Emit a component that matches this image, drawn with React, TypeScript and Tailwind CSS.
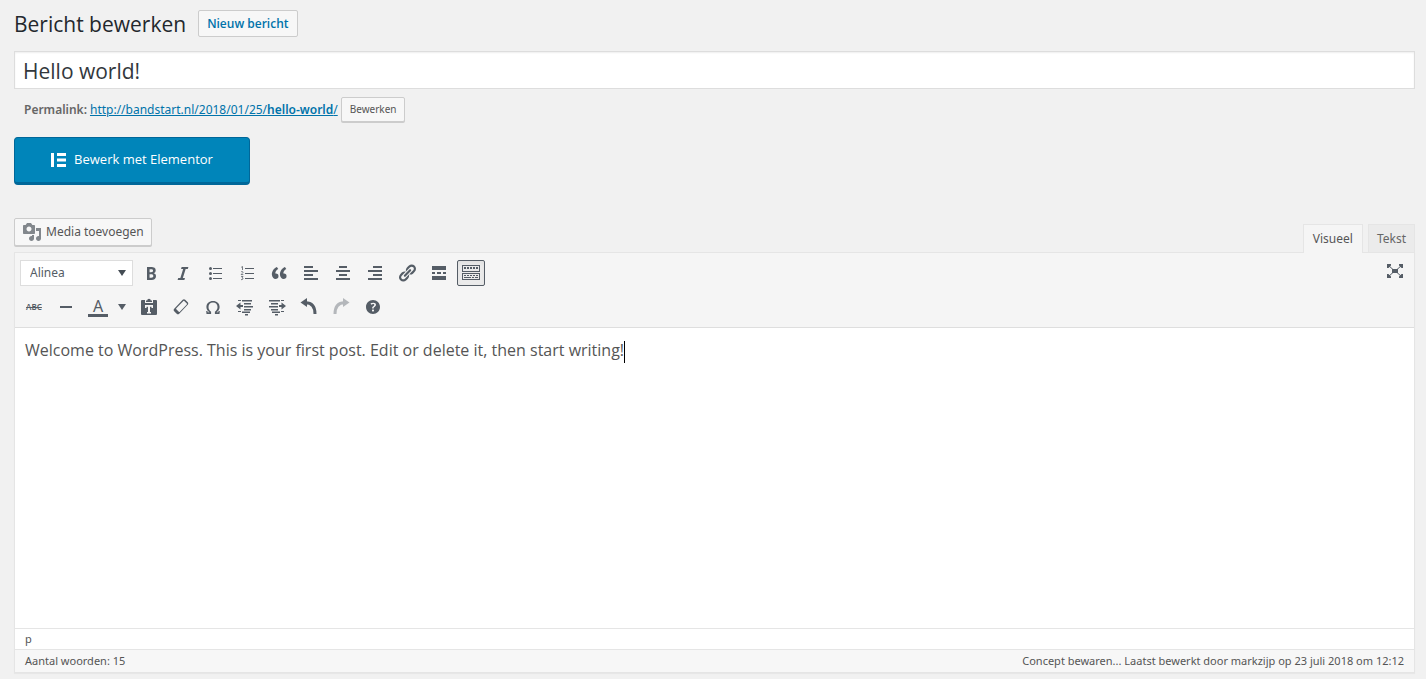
import type { ReactNode } from "react";

const icons: Record<string, ReactNode> = {
    bold: <path d="M6 4v13h4.54c1.37 0 2.46-.33 3.26-1 .8-.66 1.2-1.58 1.2-2.77 0-.84-.17-1.51-.51-2.01s-.9-.85-1.67-1.03v-.09c.57-.1 1.02-.4 1.36-.9s.51-1.13.51-1.91c0-1.14-.39-1.98-1.17-2.5C12.75 4.26 11.5 4 9.78 4H6zm2.57 5.15V6.26h1.36c.73 0 1.27.11 1.61.32.34.22.51.58.51 1.07 0 .54-.16.92-.47 1.15s-.82.35-1.51.35h-1.5zm0 2.19h1.6c1.44 0 2.16.53 2.16 1.61 0 .6-.17 1.05-.51 1.34s-.86.43-1.57.43H8.57v-3.38z" />,
    italic: <path d="M14.78 6h-2.13l-2.8 9h2.12l-.62 2H4.6l.62-2h2.14l2.8-9H8.03l.62-2h6.75z" />,
    bullets: (
        <>
            <circle cx="5.5" cy="5.5" r="1.5" />
            <circle cx="5.5" cy="10.5" r="1.5" />
            <circle cx="5.5" cy="15.5" r="1.5" />
            <path d="M8 5h9v1H8zM8 10h9v1H8zM8 15h9v1H8z" />
        </>
    ),
    numbers: (
        <>
            <path d="M8 5h9v1H8zM8 10h9v1H8zM8 15h9v1H8z" />
            <path d="M4.2 4.3L5.5 3.5V7M4 8.9c.8-.6 2-.4 2 .4s-1.5 1.5-1.8 2.3h2.1M4.1 13.5H6l-1 1.4c1.5 0 1.5 2.1-1 1.7" fill="none" stroke="currentColor" strokeWidth="0.8" />
        </>
    ),
    quote: <path d="M9.49 13.22c0-.74-.2-1.38-.61-1.9-.62-.78-1.83-.88-2.53-.72-.29-1.65 1.11-3.75 2.92-4.65L7.88 4c-2.73 1.3-5.42 4.28-4.96 8.05C3.21 14.43 4.59 16 6.54 16c.85 0 1.56-.25 2.12-.75s.83-1.18.83-2.03zm8.05 0c0-.74-.2-1.38-.61-1.9-.63-.78-1.83-.88-2.53-.72-.29-1.65 1.11-3.75 2.92-4.65L15.93 4c-2.73 1.3-5.41 4.28-4.95 8.05.29 2.38 1.66 3.95 3.61 3.95.85 0 1.56-.25 2.12-.75s.83-1.18.83-2.03z" />,
    alignLeft: <path d="M12 5V3H3v2h9zm5 4V7H3v2h14zm-5 4v-2H3v2h9zm5 4v-2H3v2h14z" />,
    alignCenter: <path d="M14 5V3H6v2h8zm3 4V7H3v2h14zm-3 4v-2H6v2h8zm3 4v-2H3v2h14z" />,
    alignRight: <path d="M17 5V3H8v2h9zm0 4V7H3v2h14zm0 4v-2H8v2h9zm0 4v-2H3v2h14z" />,
    link: <path d="M17.74 2.76c1.68 1.69 1.68 4.41 0 6.1l-1.53 1.52c-1.12 1.12-2.7 1.47-4.14 1.09l2.62-2.61.76-.77.76-.76c.84-.84.84-2.2 0-3.04-.84-.85-2.2-.85-3.04 0l-.77.76-3.38 3.38c-.37-1.44-.02-3.02 1.1-4.14l1.52-1.53c1.69-1.68 4.42-1.68 6.1 0zM8.59 13.43l5.34-5.34c.42-.42.42-1.1 0-1.52-.44-.43-1.13-.39-1.53 0l-5.33 5.34c-.42.42-.42 1.1 0 1.52.44.43 1.13.39 1.52 0zm-.76 2.29l4.14-4.15c.38 1.44.03 3.02-1.09 4.14l-1.52 1.53c-1.69 1.68-4.41 1.68-6.1 0-1.68-1.68-1.68-4.42 0-6.1l1.53-1.52c1.12-1.12 2.7-1.47 4.14-1.1l-4.14 4.15c-.85.84-.85 2.2 0 3.05.84.84 2.2.84 3.04 0z" />,
    more: <path d="M17 7V3H3v4h14zM6 11V9H3v2h3zm6 0V9H8v2h4zm5 0V9h-3v2h3zm0 6v-4H3v4h14z" />,
    toolbar: (
        <>
            <path d="M1 2h18v7H1zM1 10h18v7H1zM2 3v5h16V3zM2 11v5h16v-5z" fillRule="evenodd" />
            <path d="M3 4h2v2H3zM6 4h2v2H6zM9 4h2v2H9zM12 4h2v2h-2zM15 4h2v2h-2zM3 12h2v1H3zM6 12h2v1H6zM9 12h2v1H9zM12 12h2v1h-2zM15 12h2v1h-2zM3 14h7v1H3zM11 14h2v1h-2zM14 14h3v1h-3z" />
        </>
    ),
    line: <path d="M4 9h12v2H4z" />,
    paste: (
        <>
            <path d="M3 3h3v3h8V3h3q1 0 1 1v13q0 1-1 1H3q-1 0-1-1V4q0-1 1-1z" />
            <path d="M7 5V3.500h1.200a1.800 1.800 0 0 1 3.600 0H13V5z" />
            <path d="M6 8h8v3h-1.500V9.800H11V15h1v1.500H8V15h1V9.800H7.500V11H6z" fill="#f5f5f5" />
        </>
    ),
    eraser: <path d="M11.700 2.800c.7-.7 1.800-.7 2.500 0l2.500 2.500c.7.7.7 1.800 0 2.500L8.200 16.700c-.7.7-1.800.7-2.500 0l-2.500-2.500c-.7-.7-.7-1.800 0-2.500zM12.400 4L5.300 11.200q-.4.5 0 1l2.500 2.500q.5.4 1 0l7-7.100q.4-.6 0-1.100L13.200 4q-.4-.3-.8 0z" fillRule="evenodd" />,
    omega: <path d="M10 5.400c-2.900 0-4.500 2-4.500 4.700 0 2 .8 3.400 2.600 4.600V17H3.500l-.3-3h1.200l.4 1.300h1.700C4.500 14 3.400 12.300 3.400 10 3.400 6.400 6.100 4 10 4s6.600 2.400 6.600 6c0 2.300-1.100 4-3.100 5.300h1.700l.4-1.300h1.200l-.3 3h-4.600v-2.300c1.800-1.200 2.600-2.600 2.600-4.600 0-2.700-1.600-4.700-4.500-4.700z" />,
    outdent: <path d="M3 3h3v1H3zM7 3h10v1.500H7zM9 6h7v1.500H9zM9 9h9v1.500H9zM9 12h7v1.500H9zM3 14h3v1H3zM7 14.500h8V16H7zM10 17h3v1.500h-3zM5.500 5.500V8H8v2H5.500v2.500L1 9z" />,
    indent: <path d="M14 3h3v1h-3zM2 3h11v1.500H2zM4 6h7v1.500H4zM2 9h9v1.500H2zM4 12h7v1.500H4zM5 14.500h8V16H5zM14 14h3v1h-3zM8 17h3v1.500H8zM14.500 5.500V8H12v2h2.500v2.500L19 9z" />,
    undo: (
        <>
            <path d="M1.500 5.500L8 1v9z" />
            <path d="M6.500 5.800c6 0 9.500 3.700 9.500 11.200" fill="none" stroke="currentColor" strokeWidth="3" />
        </>
    ),
    redo: (
        <>
            <path d="M18.500 5.500L12 1v9z" />
            <path d="M13.500 5.800C7.500 5.800 4 9.500 4 17" fill="none" stroke="currentColor" strokeWidth="3" />
        </>
    ),
    help: <path d="M17 10c0-3.870-3.140-7-7-7-3.870 0-7 3.130-7 7s3.130 7 7 7c3.860 0 7-3.130 7-7zm-6.300 1.480H9.140v-.43c0-.38.08-.7.24-.98s.46-.57.88-.89c.41-.29.68-.53.81-.71.14-.18.2-.39.2-.62 0-.25-.09-.44-.28-.58-.19-.13-.45-.19-.79-.19-.58 0-1.250.19-2 .57l-.64-1.280c.87-.49 1.800-.74 2.770-.74.81 0 1.450.2 1.920.58.48.39.71.91.71 1.550 0 .43-.09.8-.29 1.110-.19.32-.57.67-1.110 1.060-.38.28-.61.49-.71.63-.1.15-.15.34-.15.57v.35zm-1.470 2.740c-.18-.17-.27-.42-.27-.73 0-.33.08-.58.26-.75s.43-.25.77-.25c.32 0 .57.09.75.26s.27.42.27.74c0 .3-.09.55-.27.72-.18.18-.43.27-.75.27-.33 0-.58-.09-.76-.26z" />,
    media: <path d="M13 11V4c0-.55-.45-1-1-1h-1.670L9 1H5L3.670 3H2c-.55 0-1 .45-1 1v7c0 .55.45 1 1 1h10c.55 0 1-.45 1-1zM7 4.500c1.380 0 2.500 1.120 2.500 2.500S8.380 9.500 7 9.500 4.500 8.380 4.500 7 5.620 4.500 7 4.500zM14 6h5v10.500c0 1.380-1.120 2.500-2.500 2.500S14 17.880 14 16.500s1.120-2.500 2.500-2.500c.17 0 .34.02.5.05V9h-3V6zm-4 8.050V13h2v3.500c0 1.380-1.120 2.500-2.500 2.500S7 17.880 7 16.500 8.120 14 9.500 14c.17 0 .34.02.5.05z" />,
    expand: (
        <>
            <path d="M7 8h6v4H7zM2 3h4v1.500L3.500 7H2zM18 3v4h-1.500L14 4.500V3zM2 17v-4h1.500L6 15.500V17zM18 17h-4v-1.500l2.500-2.500H18z" />
            <path d="M3 4l5 4.500M17 4l-5 4.500M3 16l5-4.500M17 16l-5-4.500" stroke="currentColor" />
        </>
    ),
};

function Icon({ name }: { name: string }) {
    return (
        <svg viewBox="0 0 20 20" className="size-5 shrink-0" fill="currentColor" aria-hidden="true">
            {icons[name]}
        </svg>
    );
}

function ToolButton({ label, children, active = false, disabled = false }: { label: string; children: ReactNode; active?: boolean; disabled?: boolean }) {
    return (
        <button
            type="button"
            aria-label={label}
            aria-pressed={active}
            disabled={disabled}
            className={
                active
                    ? "flex h-[26px] w-7 items-center justify-center rounded-xs border border-[#555d66] bg-[#ebebeb] shadow-inner"
                    : "flex h-[26px] w-7 items-center justify-center hover:bg-white disabled:opacity-40"
            }
        >
            {children}
        </button>
    );
}

const firstRow = [
    ["bold", "Vet"],
    ["italic", "Cursief"],
    ["bullets", "Ongenummerde lijst"],
    ["numbers", "Genummerde lijst"],
    ["quote", "Citaat"],
    ["alignLeft", "Links uitlijnen"],
    ["alignCenter", "Centreren"],
    ["alignRight", "Rechts uitlijnen"],
    ["link", "Link invoegen"],
    ["more", "Lees meer-tag invoegen"],
    ["toolbar", "Werkbalk in-/uitschakelen"],
];

const secondRow = [
    ["paste", "Plakken als tekst"],
    ["eraser", "Opmaak wissen"],
    ["omega", "Speciale tekens"],
    ["outdent", "Inspringing verkleinen"],
    ["indent", "Inspringing vergroten"],
    ["undo", "Ongedaan maken"],
    ["redo", "Opnieuw"],
    ["help", "Toetsenbordsneltoetsen"],
];

function Toolbar() {
    return (
        <div className="flex items-start justify-between border-b border-[#dedede] bg-[#f5f5f5] px-[5px] pt-[5px] pb-[7px] text-[#555d66]">
            <div className="flex flex-col gap-2 pt-0.5">
                <div className="flex items-center gap-1">
                    <div className="relative">
                        <select aria-label="Opmaak" className="h-[26px] w-[113px] appearance-none border border-[#ddd] bg-white pl-[9px] text-xs">
                            <option>Alinea</option>
                        </select>
                        <span className="pointer-events-none absolute top-[10px] right-[7px] border-x-4 border-t-[6px] border-x-transparent border-t-[#444c54]" />
                    </div>
                    {firstRow.map(([name, label]) => (
                        <ToolButton key={name} label={label} active={name === "toolbar"}>
                            <Icon name={name} />
                        </ToolButton>
                    ))}
                </div>

                <div className="flex items-center gap-1">
                    <ToolButton label="Doorhalen">
                        <span className="text-[8px] font-semibold line-through">ABC</span>
                    </ToolButton>
                    <ToolButton label="Horizontale lijn">
                        <Icon name="line" />
                    </ToolButton>
                    <div className="flex">
                        <ToolButton label="Tekstkleur">
                            <span className="w-5 border-b-3 border-[#555d66] text-center text-base leading-4">A</span>
                        </ToolButton>
                        <button type="button" aria-label="Kies een tekstkleur" className="flex w-[19px] items-center justify-center">
                            <span className="border-x-4 border-t-[6px] border-x-transparent border-t-[#555d66]" />
                        </button>
                    </div>
                    {secondRow.map(([name, label]) => (
                        <ToolButton key={name} label={label} disabled={name === "redo"}>
                            <Icon name={name} />
                        </ToolButton>
                    ))}
                </div>
            </div>

            <ToolButton label="Afleidingsvrij schrijven">
                <Icon name="expand" />
            </ToolButton>
        </div>
    );
}

export default function App() {
    return (
        <main className="min-h-screen bg-[#f1f1f1] pt-2.5 pr-[11px] pb-[7px] pl-3.5 font-['Noto_Sans','Open_Sans',sans-serif] text-xs text-[#555]">
            <header className="flex items-start gap-3">
                <h1 className="font-['Open_Sans',sans-serif] text-[21px] leading-7 text-[#23282d]">Bericht bewerken</h1>
                <a href="#" className="rounded-xs border border-[#ccc] bg-[#f7f7f7] px-2 font-['Open_Sans',sans-serif] text-xs leading-[25px] font-semibold text-[#0073aa]">
                    Nieuw bericht
                </a>
            </header>

            <input
                type="text"
                aria-label="Titel"
                defaultValue="Hello world!"
                className="mt-[13px] block h-[38px] w-full border border-[#ddd] bg-white px-2 pt-0.5 font-['Open_Sans',sans-serif] text-[21px] text-[#32373c] shadow-[inset_0_1px_2px_rgba(0,0,0,0.07)] outline-none"
            />

            <div className="mt-2 flex items-center gap-[3px] pl-2.5">
                <strong className="font-semibold text-[#666]">Permalink:</strong>
                <a href="#" className="text-[#0073aa] underline">
                    http://bandstart.nl/2018/01/25/<b className="font-semibold">hello-world</b>/
                </a>
                <button type="button" className="h-[25px] rounded-xs border border-[#ccc] bg-[#f7f7f7] px-2 text-[10px] shadow-[0_1px_0_#ccc]">
                    Bewerken
                </button>
            </div>

            <button
                type="button"
                className="mt-[15px] flex h-12 w-[236px] items-center justify-center gap-2 rounded-sm border border-b-3 border-[#006799] bg-[#0085ba] font-['Open_Sans',sans-serif] text-[13px] text-white"
            >
                <svg viewBox="0 0 15 14" className="h-3.5 w-[15px]" fill="currentColor" aria-hidden="true">
                    <path d="M0 0h3v14H0zM6 0h9v3H6zM6 5.500h9v3H6zM6 11h9v3H6z" />
                </svg>
                Bewerk met Elementor
            </button>

            <div className="mt-[33px] flex items-start justify-between">
                <button type="button" className="flex h-7 items-center gap-1 rounded-xs border border-[#ccc] bg-[#f7f7f7] px-[7px] text-xs shadow-[0_1px_0_#ccc]">
                    <svg viewBox="0 0 20 20" className="size-5 text-[#82878c]" fill="currentColor" aria-hidden="true">
                        {icons.media}
                    </svg>
                    Media toevoegen
                </button>
                <div className="flex gap-[5px] pt-1.5">
                    <button type="button" className="relative z-10 -mb-px h-[29px] border border-b-0 border-[#e5e5e5] bg-[#f5f5f5] px-[9px] text-xs">
                        Visueel
                    </button>
                    <button type="button" className="h-7 border border-b-0 border-[#e5e5e5] bg-[#ebebeb] px-2 text-xs text-[#666]">
                        Tekst
                    </button>
                </div>
            </div>

            <section className="border border-[#e5e5e5] bg-white shadow-[0_1px_1px_rgba(0,0,0,0.04)]">
                <Toolbar />
                <div
                    role="textbox"
                    aria-label="Inhoud"
                    aria-multiline="true"
                    contentEditable
                    suppressContentEditableWarning
                    className="min-h-[300px] px-2.5 py-[9px] font-['Open_Sans',sans-serif] text-base leading-[26px] text-[#555] outline-none"
                >
                    <p>
                        Welcome to WordPress. This is your first post. Edit or delete it, then start writing!
                        <span className="inline-block h-[22px] w-px bg-black align-middle" />
                    </p>
                </div>
                <div className="border-t border-[#e5e5e5] px-2.5 text-[11px] leading-5">p</div>
                <div className="flex justify-between border-t border-[#e5e5e5] bg-[#f7f7f7] px-2.5 text-[11px] leading-[22px]">
                    <span>Aantal woorden: 15</span>
                    <span>Concept bewaren... Laatst bewerkt door markzijp op 23 juli 2018 om 12:12</span>
                </div>
            </section>
        </main>
    );
}
